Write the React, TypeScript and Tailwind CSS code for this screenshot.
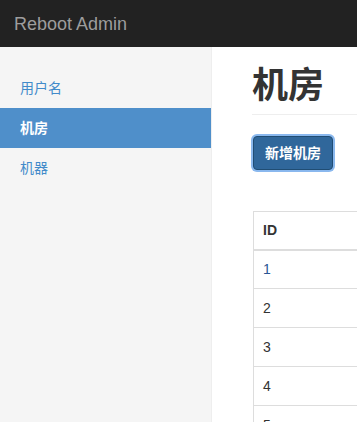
import React from "react";

const cjk = '"Liberation Sans", "Noto Sans CJK SC", sans-serif';

export default function App() {
  const rows = ["1", "2", "3", "4", "5"];
  return (
    <div className="h-screen overflow-hidden bg-white flex flex-col" style={{ fontFamily: cjk }}>
      <div className="h-[47px] shrink-0 bg-[#222222] flex items-center px-[14px]">
        <span className="text-[18px] text-[#9d9d9d] leading-none">Reboot Admin</span>
      </div>
      <div className="flex flex-1 min-h-0">
        <div className="w-[212px] shrink-0 bg-[#f5f5f5] border-r border-[#eeeeee] pt-[21px]">
          <div className="h-[40px] flex items-center px-[20px] text-[14px] text-[#428bca]">用户名</div>
          <div className="h-[40px] flex items-center px-[20px] text-[14px] text-white bg-[#4f8fca] font-bold">机房</div>
          <div className="h-[40px] flex items-center px-[20px] text-[14px] text-[#428bca]">机器</div>
        </div>
        <div className="flex-1 min-w-0 overflow-hidden pl-[40px]">
          <div className="w-[600px]">
            <div className="pt-[19px] pb-[8px] border-b border-[#eeeeee]">
              <h1 className="text-[36px] leading-[40px] font-bold text-[#333333]">机房</h1>
            </div>
            <div className="mt-[21px] pl-[1px]">
              <button className="h-[34px] px-[11px] rounded-[4px] bg-[#30679b] border border-[#204d74] text-white text-[14px] font-bold shadow-[0_0_0_2px_#8ab8ee]">
                新增机房
              </button>
            </div>
            <div className="mt-[41px] pl-[1px]">
              <table className="border-collapse w-[300px] text-[14px] text-[#333333]">
                <thead>
                  <tr>
                    <th className="h-[38px] border border-[#dddddd] border-b-2 text-left font-bold px-[9px]">ID</th>
                  </tr>
                </thead>
                <tbody>
                  {rows.map((r, i) => (
                    <tr key={r}>
                      <td className={`h-[39px] border border-[#dddddd] px-[9px] ${i === 0 ? "text-[#2a5694]" : "text-[#333333]"}`}>
                        {r}
                      </td>
                    </tr>
                  ))}
                </tbody>
              </table>
            </div>
          </div>
        </div>
      </div>
    </div>
  );
}
